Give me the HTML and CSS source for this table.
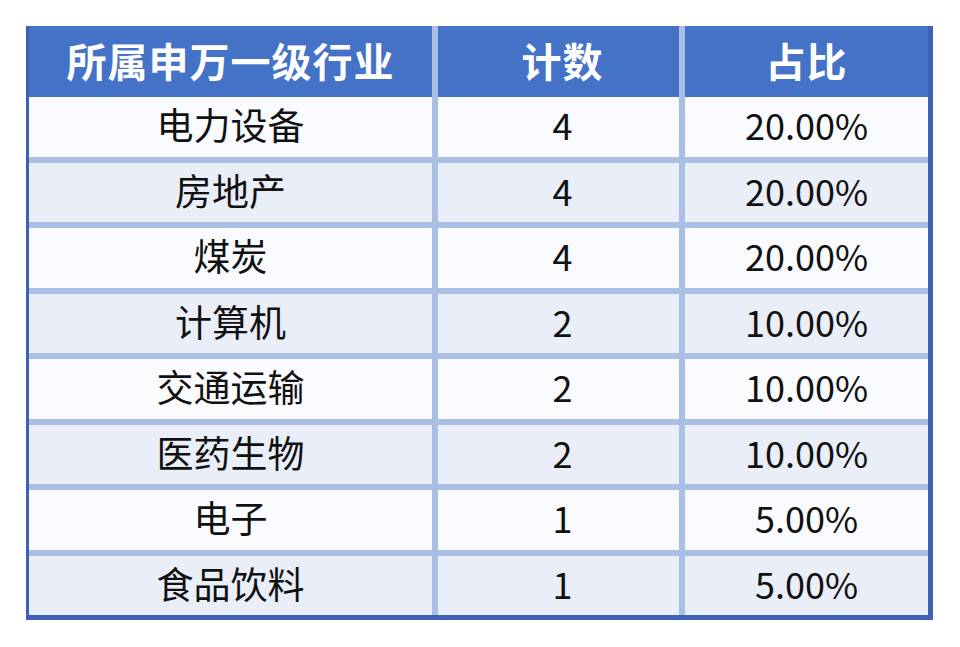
FILE: index.html
```html
<!DOCTYPE html>
<html lang="zh-CN">
<head>
<meta charset="utf-8">
<title>申万一级行业分布</title>
<link rel="stylesheet" href="styles.css">
</head>
<body>
<div class="table">
  <div class="thead">
    <div class="th">所属申万一级行业</div>
    <div class="th">计数</div>
    <div class="th">占比</div>
  </div>
  <div class="tbody">
    <div class="td name">电力设备</div><div class="td num">4</div><div class="td pct">20.00%</div>
    <div class="td name alt">房地产</div><div class="td num alt">4</div><div class="td pct alt">20.00%</div>
    <div class="td name">煤炭</div><div class="td num">4</div><div class="td pct">20.00%</div>
    <div class="td name alt">计算机</div><div class="td num alt">2</div><div class="td pct alt">10.00%</div>
    <div class="td name">交通运输</div><div class="td num">2</div><div class="td pct">10.00%</div>
    <div class="td name alt">医药生物</div><div class="td num alt">2</div><div class="td pct alt">10.00%</div>
    <div class="td name">电子</div><div class="td num">1</div><div class="td pct">5.00%</div>
    <div class="td name alt">食品饮料</div><div class="td num alt">1</div><div class="td pct alt">5.00%</div>
  </div>
</div>
</body>
</html>
```
FILE: styles.css
```css
html, body {
  margin: 0;
  padding: 0;
  background: #ffffff;
}
body {
  font-family: "Noto Sans CJK SC", "Noto Sans", sans-serif;
  color: #111111;
  padding: 26px 0 0 26px;
}
.table {
  width: 907px;
  box-sizing: border-box;
  border-left: 3px solid #3d62b3;
  border-right: 5px solid #3d62b3;
  border-bottom: 5px solid #3d62b3;
  background: #a9bfe3;
  display: flex;
  flex-direction: column;
}
.thead, .tbody {
  display: grid;
  grid-template-columns: 403px 241px 243px;
  column-gap: 6px;
}
.tbody {
  row-gap: 6px;
  grid-auto-rows: 59.5px;
}
.th {
  height: 71px;
  box-sizing: border-box;
  padding-bottom: 4px;
  background: #4472c6;
  color: #ffffff;
  font-weight: 700;
  font-size: 40px;
  display: flex;
  align-items: center;
  justify-content: center;
  letter-spacing: 1px;
}
.th:nth-child(2) {
  padding-left: 8px;
}
.td {
  box-sizing: border-box;
  padding-bottom: 5px;
  background: #f9fbfe;
  font-size: 36px;
  display: flex;
  align-items: center;
  justify-content: center;
}
.td.name {
  font-size: 37px;
}
.td.num {
  padding-left: 8px;
}
.td.alt {
  background: #e9eef8;
}
```
